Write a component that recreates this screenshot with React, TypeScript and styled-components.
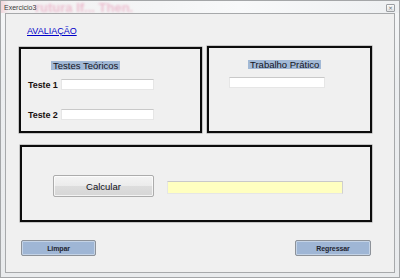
import React from "react";
import styled, { createGlobalStyle } from "styled-components";

const Global = createGlobalStyle`
  html, body { margin: 0; padding: 0; background: #ffffff; }
  body { font-family: "Liberation Sans", Arial, sans-serif; }
  * { box-sizing: border-box; }
`;

const Window = styled.div`
  width: 400px;
  height: 278px;
  display: flex;
  flex-direction: column;
  background: linear-gradient(180deg, #f6f7f8 0%, #eceef0 30%, #e9ebed 100%);
  border: 1px solid #a4a6a8;
  overflow: hidden;
`;

const TitleBar = styled.div`
  position: relative;
  height: 12px;
  display: flex;
  align-items: center;
  padding: 0 4px 0 3px;
  background: linear-gradient(90deg, #f1d6dc 0px, #f3f1f2 8px, #f4f5f6 40%, #f8f9fa 60%, #eef0f2 100%);
`;

const GhostText = styled.span`
  position: absolute;
  left: 34px;
  top: -1px;
  font-family: "Liberation Sans", Arial, sans-serif;
  font-size: 13px;
  font-weight: bold;
  color: #e9a8c0;
  filter: blur(1.2px);
  opacity: 0.7;
  white-space: nowrap;
`;

const TitleText = styled.span`
  position: relative;
  font-family: "Liberation Sans", Arial, sans-serif;
  font-size: 7px;
  color: #3a3a3a;
  line-height: 8px;
  margin-top: 2px;
`;

const CloseBtn = styled.div`
  position: absolute;
  right: 4px;
  top: 3px;
  width: 9px;
  height: 8px;
  border: 1px solid #9c9fa3;
  border-radius: 1px;
  background: linear-gradient(180deg, #fbfbfb, #e2e4e6);
  display: flex;
  align-items: center;
  justify-content: center;
  font-family: "DejaVu Sans", sans-serif;
  font-size: 6px;
  line-height: 6px;
  color: #6b6e72;
`;

const Client = styled.div`
  flex: 1;
  margin: 0 4px 4px 4px;
  border: 1px solid #a7a9ab;
  background: #f0f0f0;
  display: flex;
  flex-direction: column;
  padding: 12px 0 0 13px;
`;

const Link = styled.a`
  margin-left: 8px;
  font-family: "Liberation Sans", Arial, sans-serif;
  font-size: 9px;
  line-height: 10px;
  height: 10px;
  color: #0000c8;
  text-decoration: underline;
  align-self: flex-start;
  cursor: pointer;
`;

const TopRow = styled.div`
  display: flex;
  align-items: flex-start;
  gap: 5px;
  margin-top: 10px;
`;

const Panel = styled.div<{ $w: number; $h: number; $mt?: number }>`
  width: ${(p) => p.$w}px;
  height: ${(p) => p.$h}px;
  margin-top: ${(p) => p.$mt ?? 0}px;
  border: 2px solid #0c0c0c;
  box-shadow: 0 0 0 0.5px #9a9a9a;
  display: flex;
  flex-direction: column;
  align-items: flex-start;
`;

const TheoryPanel = styled(Panel)`
  padding: 12px 0 0 7px;
`;

const PracticePanel = styled(Panel)`
  padding: 12px 0 0 20px;
`;

const CalcPanel = styled(Panel)`
  flex-direction: row;
  margin-left: 1px;
  padding: 28px 0 0 31px;
`;

const Header = styled.span<{ $ml: number }>`
  margin-left: ${(p) => p.$ml}px;
  height: 9px;
  padding: 0 2px;
  background: #a2b9d6;
  font-family: "Liberation Sans", Arial, sans-serif;
  font-size: 9.5px;
  line-height: 9px;
  color: #14141c;
  white-space: nowrap;
`;

const FieldRow = styled.div<{ $mt: number }>`
  display: flex;
  align-items: center;
  margin-top: ${(p) => p.$mt}px;
`;

const FieldLabel = styled.span`
  width: 33px;
  font-family: "Liberation Sans", Arial, sans-serif;
  font-size: 9px;
  line-height: 10px;
  color: #1a1010;
  font-weight: bold;
  letter-spacing: -0.1px;
`;

const TextBox = styled.div<{ $w: number; $mt?: number; $ml?: number; $bg?: string }>`
  width: ${(p) => p.$w}px;
  height: ${(p) => (p.$bg ? 13 : 11)}px;
  margin-top: ${(p) => p.$mt ?? 0}px;
  margin-left: ${(p) => p.$ml ?? 0}px;
  background: ${(p) => p.$bg ?? "#ffffff"};
  border: 1px solid #e6e6e6;
  border-top-color: #c9c9c9;
  border-right-color: ${(p) => (p.$bg ? "#d0d0d0" : "#e6e6e6")};
`;

const CalcButton = styled.div`
  width: 101px;
  height: 22px;
  border: 1px solid #acacac;
  border-radius: 2px;
  background: linear-gradient(180deg, #f4f4f4 0%, #ebebeb 50%, #dddddd 51%, #d6d6d6 100%);
  box-shadow: inset 0 0 0 1px rgba(255, 255, 255, 0.7);
  display: flex;
  align-items: center;
  justify-content: center;
  font-family: "Liberation Sans", Arial, sans-serif;
  font-size: 9.5px;
  color: #101018;
`;

const BottomRow = styled.div`
  display: flex;
  justify-content: space-between;
  width: 350px;
  margin: 18px 0 0 2px;
`;

const FlatButton = styled.div<{ $w: number }>`
  width: ${(p) => p.$w}px;
  height: 16px;
  border: 1px solid #8d9299;
  border-radius: 2px;
  background: #9fb6d5;
  box-shadow: inset 0 0 0 1px #c4d3e6;
  display: flex;
  align-items: center;
  justify-content: center;
  font-family: "Liberation Sans", Arial, sans-serif;
  font-size: 7px;
  font-weight: bold;
  color: #1e2430;
  letter-spacing: -0.1px;
`;

export default function App() {
  return (
    <>
      <Global />
      <Window>
        <TitleBar>
          <GhostText>rutura If... Then.</GhostText>
          <TitleText>Exercicio3</TitleText>
          <CloseBtn>×</CloseBtn>
        </TitleBar>
        <Client>
          <Link>AVALIAÇÃO</Link>
          <TopRow>
            <TheoryPanel $w={183} $h={86} $mt={1}>
              <Header $ml={23}>Testes Teóricos</Header>
              <FieldRow $mt={9}>
                <FieldLabel>Teste 1</FieldLabel>
                <TextBox $w={93} />
              </FieldRow>
              <FieldRow $mt={19}>
                <FieldLabel>Teste 2</FieldLabel>
                <TextBox $w={93} />
              </FieldRow>
            </TheoryPanel>
            <PracticePanel $w={165} $h={87}>
              <Header $ml={19}>Trabalho Prático</Header>
              <TextBox $w={96} $mt={8} />
            </PracticePanel>
          </TopRow>
          <CalcPanel $w={352} $h={77} $mt={12}>
            <CalcButton>Calcular</CalcButton>
            <TextBox $w={176} $mt={6} $ml={13} $bg="#ffffc0" />
          </CalcPanel>
          <BottomRow>
            <FlatButton $w={75}>Limpar</FlatButton>
            <FlatButton $w={76}>Regressar</FlatButton>
          </BottomRow>
        </Client>
      </Window>
    </>
  );
}
